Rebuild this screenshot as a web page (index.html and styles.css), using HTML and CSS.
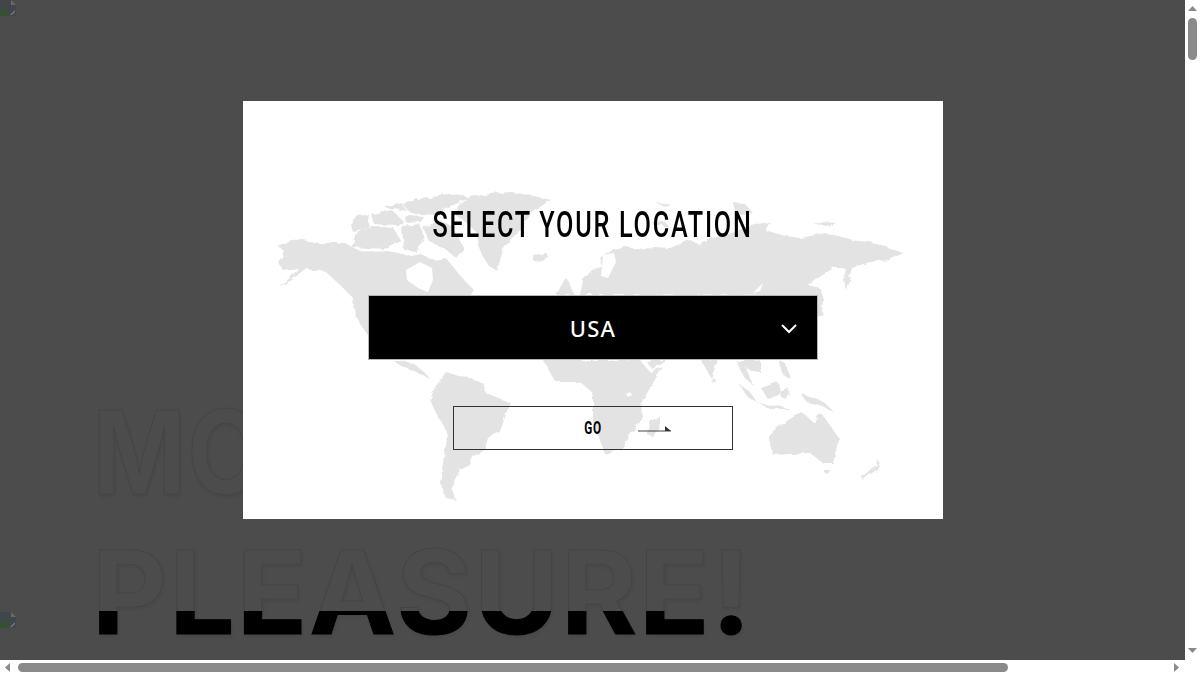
FILE: index.html
```html
<!DOCTYPE html>
<html lang="en">
<head>
<meta charset="utf-8">
<title>Select your location</title>
<link rel="stylesheet" href="styles.css">
</head>
<body>
<div class="window">
  <main class="page">
    <svg class="broken broken-top" viewBox="0 0 16 16"><path d="M0 0H11L16 5V16H0Z" fill="#40464a"/><path d="M11 0V5H16Z" fill="#6a6a6a"/><path d="M1 15V13L5 9L9 12L5 15Z" fill="#2b5a1e"/><path d="M10 15L15 10V12L12 15Z" fill="#777"/></svg>
    <section class="hero">
      <h1 class="hero-line hero-first">MORE</h1>
      <h1 class="hero-line hero-cut">PLEASURE!</h1>
    </section>
    <svg class="broken broken-bottom" viewBox="0 0 16 16"><path d="M0 0H11L16 5V16H0Z" fill="#40464a"/><path d="M11 0V5H16Z" fill="#6a6a6a"/><path d="M1 15V13L5 9L9 12L5 15Z" fill="#2b5a1e"/><path d="M10 15L15 10V12L12 15Z" fill="#777"/></svg>
    <div class="overlay">
      <div class="modal">
        <svg class="map" viewBox="243 101 700 418" aria-hidden="true">
          <defs>
            <filter id="coast" x="-5%" y="-5%" width="110%" height="110%">
              <feTurbulence type="fractalNoise" baseFrequency="0.11" numOctaves="3" seed="4" result="n"/>
              <feDisplacementMap in="SourceGraphic" in2="n" scale="5"/>
            </filter>
          </defs>
          <g class="land" filter="url(#coast)">
            <path d="M278 262L285 252L278 246L288 241L297 239L320 243L345 243L356 249L372 252L388 251L404 254L412 256L420 254L432 260L446 258L458 273L466 282L474 290L470 296L452 298L369 336L362 327L355 315L353 298L340 285L326 272L306 268L292 280L278 287L292 276L298 268L283 270Z"/>
            <path d="M356 232L372 226L394 228L400 240L384 249L352 247Z"/>
            <path d="M350 224L358 214L370 216L368 228L352 231Z"/>
            <path d="M371 214L392 210L404 222L398 226L374 224Z"/>
            <path d="M403 205L420 198L440 196L462 194L468 198L458 203L445 208L438 215L420 214L410 212Z"/>
            <path d="M384 206L402 204L406 210L390 209Z"/>
            <path d="M405 215L424 216L421 222L406 223Z"/>
            <path d="M423 228L440 220L452 226L464 248L456 258L444 248L430 242Z"/>
            <path d="M402 226L420 224L424 238L416 252L404 250Z"/>
            <path d="M458 206L470 197L490 194L510 192L530 195L551 200L540 207L530 215L522 228L510 240L503 250L497 271L488 265L483 257L478 245L476 232L466 222L455 215Z"/>
            <path d="M533 255L546 253L549 258L540 262L534 261Z"/>
            <path d="M566 277L570 285L574 295L556 295L560 288Z"/>
            <path d="M580 295L583 280L592 270L603 268L600 258L610 250L625 246L640 250L655 247L670 248L690 240L700 245L712 238L735 232L750 225L770 222L765 230L785 236L800 238L826 233L853 240L876 243L903 253L890 260L870 262L860 265L852 268L846 290L844 280L846 268L835 268L820 275L808 285L820 288L824 300L823 314L817 316L817 296Z"/>
            <path d="M733 203L745 204L753 213L740 214L735 210Z"/>
            <path d="M652 222L665 222L668 226L655 226Z"/>
            <path d="M655 202L672 204L664 206Z"/>
            <path d="M812 222L838 223L826 226Z"/>
            <path d="M393 360L413 363L425 373L430 379L424 376L412 370L402 367Z"/>
            <path d="M446 372L466 377L483 383L486 393L511 403L505 417L500 432L488 438L485 448L473 457L470 465L460 470L451 487L456 500L446 498L440 483L443 463L448 433L438 417L430 400L435 387Z"/>
            <path d="M543 360L640 360L650 372L663 367L656 378L640 405L643 417L630 435L623 448L606 455L601 443L593 420L593 393L580 382L556 382Z"/>
            <path d="M645 360L668 360L652 369Z"/>
            <path d="M660 415L660 425L653 437L648 435L650 422Z"/>
            <path d="M701 360L718 360L711 378Z"/>
            <path d="M712 377L716 380L714 384L711 381Z"/>
            <path d="M736 360L760 360L760 372L752 371L746 368L753 385L745 378L738 366Z"/>
            <path d="M738 383L750 392L757 402L748 397Z"/>
            <path d="M761 388L778 382L781 394L768 399Z"/>
            <path d="M757 403L778 406L790 409L772 409Z"/>
            <path d="M779 360L786 364L790 378L784 376L780 368Z"/>
            <path d="M781 392L790 388L787 400L782 398Z"/>
            <path d="M800 393L815 398L824 402L833 411L820 406L808 403Z"/>
            <path d="M770 433L793 417L803 413L813 422L821 413L839 438L833 463L823 463L810 453L773 455L768 437Z"/>
            <path d="M823 470L830 470L827 475Z"/>
            <path d="M880 463L876 470L863 480L862 477L872 468Z"/>
            <path d="M875 458L879 462L876 465Z"/>
          </g>
          <g class="water">
            <path d="M406 270L420 262L432 268L433 280L428 292L418 288L407 280Z"/>
            <path d="M603 255L614 253L616 262L608 278L601 276Z"/>
            <path d="M753 293L763 283L760 291Z"/>
            <path d="M626 394L630 392L632 395L628 397Z"/>
          </g>
        </svg>
        <h2 class="title">SELECT YOUR LOCATION</h2>
        <div class="select">
          <span class="select-value">USA</span>
          <svg class="chevron" viewBox="0 0 16 10"><path d="M1 1L8 8L15 1"/></svg>
        </div>
        <button class="go">
          <span class="go-label">GO</span>
          <svg class="go-arrow" viewBox="0 0 33 6"><path class="go-line" d="M0 5H33"/><path class="go-head" d="M27 0L33 5H27Z"/></svg>
        </button>
      </div>
    </div>
  </main>
  <div class="vbar">
    <svg class="tri" viewBox="0 0 9 5"><path d="M4.5 0L9 5H0Z"/></svg>
    <div class="vthumb"></div>
    <svg class="tri tri-end" viewBox="0 0 9 5"><path d="M0 0H9L4.500 5Z"/></svg>
  </div>
  <div class="hbar">
    <svg class="tri-h" viewBox="0 0 5 9"><path d="M5 0V9L0 4.500Z"/></svg>
    <div class="hthumb"></div>
    <svg class="tri-h tri-h-end" viewBox="0 0 5 9"><path d="M0 0V9L5 4.500Z"/></svg>
  </div>
  <div class="corner"></div>
</div>
</body>
</html>
```
FILE: styles.css
```css
* { box-sizing: border-box; }
html, body { margin: 0; height: 100%; overflow: hidden; background: #fff; }
.window {
  width: 1200px; height: 675px;
  display: grid;
  grid-template-columns: 1185px 15px;
  grid-template-rows: 660px 15px;
}
.page { position: relative; overflow: hidden; background: #fff; }
.broken { position: absolute; left: 0; width: 16px; height: 16px; z-index: 2; }
.broken-top { top: 0; }
.broken-bottom { top: 612px; }
.hero {
  padding: 392px 0 0 92px;
  display: flex; flex-direction: column; gap: 20px;
}
.hero-line {
  margin: 0;
  height: 120px;
  font: 700 116px/120px "Inter", sans-serif;
  letter-spacing: 2px;
  color: transparent;
  background: #fff;
  -webkit-background-clip: text;
  background-clip: text;
  white-space: nowrap;
  -webkit-text-stroke: 1px rgba(0,0,0,.12);
  filter: drop-shadow(1px 2px 2px rgba(0,0,0,.08));
}
.hero-first {
  transform: scaleX(.86);
  transform-origin: 5px 50%;
}
.hero-cut {
  background-image: linear-gradient(#fff 0, #fff 79px, #000 79px, #000 100%);
}
.overlay {
  position: absolute; inset: 0;
  background: rgba(0,0,0,.7);
  display: flex; justify-content: center; align-items: flex-start;
  padding: 101px 0 0 1px;
  z-index: 1;
}
.modal {
  position: relative;
  width: 700px; height: 418px;
  background: #fff;
  display: flex; flex-direction: column; align-items: center;
  overflow: hidden;
}
.map { position: absolute; inset: 0; width: 700px; height: 418px; }
.land path { fill: #e3e3e3; }
.water path { fill: #fff; }
.title {
  position: relative;
  margin: 102px 0 0;
  height: 44px;
  font: 500 36px/44px "Roboto", sans-serif;
  letter-spacing: 2.5px;
  color: #000;
  white-space: nowrap;
  transform: scaleX(.7);
}
.select {
  position: relative;
  margin-top: 48px;
  width: 450px; height: 65px;
  background: #000;
  border: 1px solid #b5b5b5;
  display: flex; align-items: center; justify-content: center;
}
.select-value {
  font: 500 22px/1 "Noto Sans", sans-serif;
  letter-spacing: 1.2px;
  color: #fff;
}
.chevron {
  position: absolute; right: 20px; top: 28px;
  width: 16px; height: 10px;
  fill: none; stroke: #fff; stroke-width: 2;
}
.go {
  position: relative;
  margin-top: 46px;
  width: 280px; height: 44px;
  background: transparent;
  border: 1px solid #333;
  padding: 0;
  display: flex; align-items: center; justify-content: center;
}
.go-label {
  font: 700 19px/1 "Roboto", sans-serif;
  letter-spacing: 1px;
  color: #000;
  transform: translateY(-1px) scaleX(.62);
}
.go-arrow {
  position: absolute; left: 184px; top: 19px;
  width: 33px; height: 6px;
}
.go-line { stroke: #444; stroke-width: 1; fill: none; }
.go-head { fill: #333; }
.vbar {
  background: #fff;
  display: flex; flex-direction: column; align-items: center;
  padding: 6px 0 7px;
}
.tri { width: 9px; height: 5px; fill: #8a8a8a; flex: none; }
.tri-end { margin-top: auto; }
.vthumb { width: 9px; height: 42px; margin-top: 7px; border-radius: 5px; background: #8a8a8a; }
.hbar {
  background: #fff;
  display: flex; align-items: flex-start;
  padding: 3px 6px 0 5px;
}
.tri-h { width: 5px; height: 9px; fill: #8a8a8a; flex: none; }
.tri-h-end { margin-left: auto; }
.hthumb { width: 990px; height: 9px; margin-left: 8px; border-radius: 5px; background: #8a8a8a; }
.corner { background: #fff; }
```
